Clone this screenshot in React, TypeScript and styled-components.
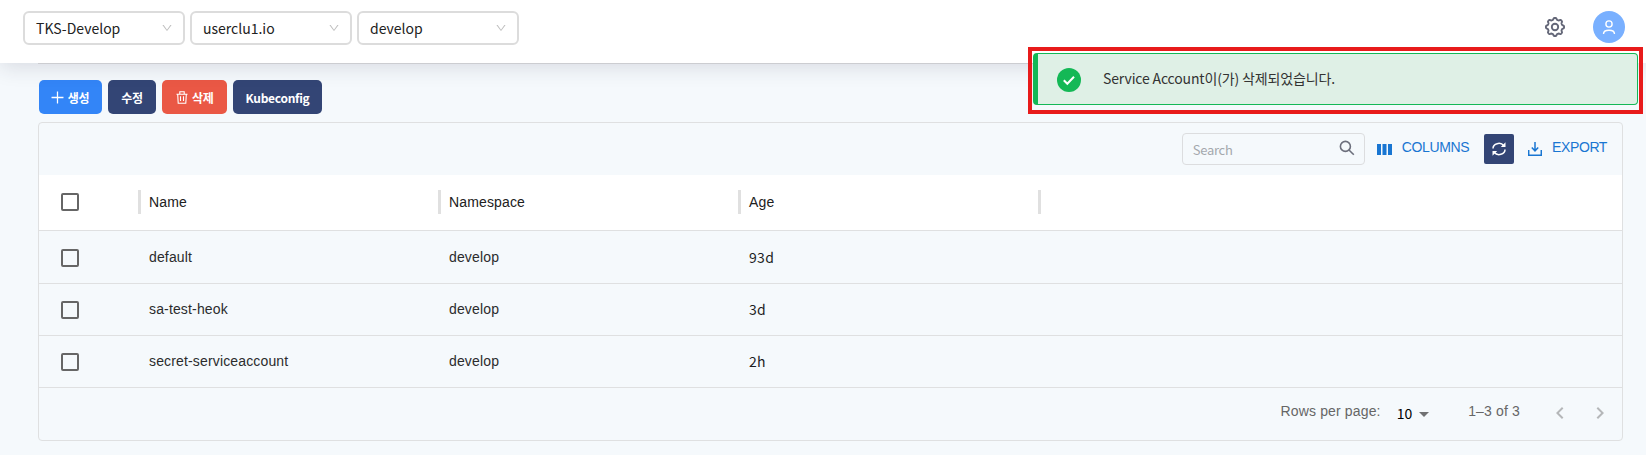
import React from "react";
import styled, { createGlobalStyle } from "styled-components";
import { AiOutlineDelete, AiOutlineDown, AiOutlinePlus } from "react-icons/ai";
import { MdArrowDropDown, MdKeyboardArrowLeft, MdKeyboardArrowRight } from "react-icons/md";

const kr = `"Noto Sans CJK KR", "Noto Sans", sans-serif`;
const arial = `"Liberation Sans", Arial, sans-serif`;

const Global = createGlobalStyle`
  * { box-sizing: border-box; }
  body { margin: 0; background: #f5f9fc; font-family: ${kr}; }
  button { font: inherit; border: 0; padding: 0; background: none; }
`;

const Page = styled.div`
  height: 455px;
  overflow: hidden;
  background: #f5f9fc;
`;

const Header = styled.header`
  position: relative;
  z-index: 1;
  display: flex;
  align-items: flex-start;
  gap: 5px;
  height: 63px;
  padding: 11px 21px 0 23px;
  background: #fff;
  box-shadow: 0 4px 20px rgba(45, 35, 66, 0.14);
`;

const Select = styled.button`
  display: flex;
  align-items: center;
  justify-content: space-between;
  width: 162px;
  height: 34px;
  padding: 0 10px 0 11px;
  border: 2px solid #dcdcdc;
  border-radius: 6px;
  background: #fff;
  color: #222;
  font-size: 14px;
  line-height: 30px;
  svg { color: #bfbfbf; }
`;

const HeaderTools = styled.div`
  display: flex;
  align-items: center;
  gap: 27px;
  height: 32px;
  margin-left: auto;
`;

const Avatar = styled.div`
  display: grid;
  place-items: center;
  width: 32px;
  height: 32px;
  border-radius: 50%;
  background: #79b0ff;
`;

const Main = styled.main`
  margin: 0 23px 0 38px;
  border-top: 1px solid #dcdde0;
`;

const Actions = styled.div`
  display: flex;
  gap: 6px;
  padding: 16px 1px 8px;
`;

const ActionButton = styled.button<{ $tone: string; $width: number; $inset?: number }>`
  display: flex;
  align-items: center;
  justify-content: center;
  gap: 2px;
  width: ${(p) => p.$width}px;
  height: 34px;
  padding-right: ${(p) => p.$inset ?? 0}px;
  border-radius: 5px;
  background: ${(p) => p.$tone};
  color: #fff;
  font-size: 12px;
  font-weight: 700;
  letter-spacing: -0.3px;
`;

const Card = styled.section`
  height: 319px;
  border: 1px solid #dfe0e1;
  border-radius: 4px;
  font-family: ${arial};
  font-size: 14px;
  color: #2b2c2d;
`;

const Toolbar = styled.div`
  display: flex;
  align-items: flex-start;
  justify-content: flex-end;
  height: 52px;
  padding: 10px 15px 0 0;
`;

const SearchBox = styled.label`
  display: flex;
  align-items: center;
  justify-content: space-between;
  width: 183px;
  height: 32px;
  padding: 0 9px 0 10px;
  border: 1px solid #dcdddf;
  border-radius: 4px;
  color: #a4a8ad;
  font-family: ${kr};
  font-size: 13px;
  letter-spacing: -0.3px;
  svg { margin-bottom: 2px; }
`;

const ToolLink = styled.button<{ $gap: number }>`
  display: flex;
  align-items: center;
  gap: ${(p) => p.$gap}px;
  margin-left: 12px;
  height: 32px;
  color: #1976d2;
  font-size: 14px;
  letter-spacing: -0.4px;
  span { margin-bottom: 4px; }
`;

const Refresh = styled.button`
  display: grid;
  place-items: center;
  width: 30px;
  height: 30px;
  margin: 1px 2px 0 15px;
  border-radius: 2px;
  background: #334575;
`;

const Row = styled.div<{ $head?: boolean; $height?: number }>`
  display: grid;
  grid-template-columns: 100px 300px 300px 300px 1fr;
  align-items: center;
  height: ${(p) => p.$height ?? 52}px;
  padding-bottom: ${(p) => (p.$head ? 1 : 0)}px;
  border-bottom: 1px solid #dfe0e1;
  background: ${(p) => (p.$head ? "#fff" : "transparent")};
  color: ${(p) => (p.$head ? "#212121" : "#2b2c2d")};
`;

const Cell = styled.div<{ $kr?: boolean }>`
  margin-bottom: 1px;
  padding-left: 10px;
  color: ${(p) => (p.$kr ? "#1c1d1f" : "inherit")};
  font-family: ${(p) => (p.$kr ? kr : arial)};
  letter-spacing: ${(p) => (p.$kr ? 0.3 : 0.15)}px;
  line-height: 20px;
`;

const HeadCell = styled.div`
  height: 24px;
  margin-left: -1px;
  padding-left: 8px;
  border-left: 3px solid #e0e0e0;
  letter-spacing: 0.15px;
  line-height: 24px;
`;

const Checkbox = styled.span<{ $drop?: number }>`
  width: 18px;
  height: 18px;
  margin: ${(p) => p.$drop ?? 0}px 0 0 22px;
  border: 2px solid #666;
  border-radius: 2px;
`;

const Footer = styled.footer`
  display: flex;
  align-items: center;
  justify-content: flex-end;
  height: 50px;
  padding-right: 10px;
  color: #666;
  svg { color: #b5b7b9; }
`;

const PageSize = styled.button`
  display: flex;
  align-items: center;
  margin: 1px 32px 0 16px;
  color: #000;
  font-family: ${kr};
  font-size: 14px;
  line-height: 20px;
  span { margin-bottom: 2px; }
  svg { color: #707173; }
`;

const FooterText = styled.span`
  margin-bottom: 4px;
  letter-spacing: 0.15px;
`;

const Pager = styled.div`
  display: flex;
  gap: 16px;
  margin-left: 28px;
`;

const ToastFrame = styled.div`
  position: absolute;
  z-index: 2;
  top: 47px;
  left: 1028px;
  width: 615px;
  height: 67px;
  padding: 2px 1px;
  border: 4px solid #e81b1b;
`;

const Toast = styled.div`
  display: flex;
  align-items: center;
  height: 52px;
  border: 1px solid #14b856;
  border-left-width: 5px;
  border-radius: 4px;
  background: #dff0e6;
  color: #333;
  font-size: 14px;
  letter-spacing: -0.15px;
  gap: 22px;
  padding-left: 19px;
  svg { margin-top: 2px; }
  span { margin-bottom: 2px; }
`;

const rows = [
  ["default", "develop", "93d"],
  ["sa-test-heok", "develop", "3d"],
  ["secret-serviceaccount", "develop", "2h"],
];

// Outline of an eight-toothed cog, sampled around the centre of a 22px box.
const cogPath =
  Array.from({ length: 96 }, (_, i) => {
    const angle = (i / 96) * Math.PI * 2;
    const radius = 8.2 + Math.tanh(2 * Math.cos(8 * angle)) * 0.9;
    const x = (11 + radius * Math.sin(angle)).toFixed(2);
    const y = (11 - radius * Math.cos(angle)).toFixed(2);
    return `${i ? "L" : "M"}${x} ${y}`;
  }).join("") + "Z";

const SettingsIcon = () => (
  <svg width="22" height="22" viewBox="0 0 22 22" fill="none" stroke="#646778" strokeWidth="1.9" strokeLinejoin="round">
    <path d={cogPath} />
    <circle cx="11" cy="11" r="3.2" />
  </svg>
);

const TrashIcon = () => (
  <svg width="12" height="13" viewBox="0 0 12 13" fill="none" stroke="#fff" strokeWidth="1.1">
    <path d="M.5 3.200h11M3.800 3V.8h4.400V3M1.700 3.400l.5 8.800h7.600l.5-8.800M4.500 5.300v4.800M7.500 5.300v4.800" />
  </svg>
);

export default function App() {
  return (
    <Page>
      <Global />
      <Header>
        {["TKS-Develop", "userclu1.io", "develop"].map((label) => (
          <Select key={label}>{label}<AiOutlineDown size={12} /></Select>
        ))}
        <HeaderTools>
          <SettingsIcon />
          <Avatar>
            <svg width="14" height="16" viewBox="0 0 14 16" fill="none" stroke="#fff" strokeWidth="1.4">
              <circle cx="7" cy="5" r="3.1" />
              <path d="M1.5 15c0-5 11-5 11 0" />
            </svg>
          </Avatar>
        </HeaderTools>
      </Header>
      <Main>
        <Actions>
          <ActionButton $tone="#3385f7" $width={63} $inset={3}><AiOutlinePlus size={17} />생성</ActionButton>
          <ActionButton $tone="#334575" $width={48}>수정</ActionButton>
          <ActionButton $tone="#ea5845" $width={65}><TrashIcon />&nbsp;삭제</ActionButton>
          <ActionButton $tone="#334575" $width={89}>Kubeconfig</ActionButton>
        </Actions>
        <Card>
          <Toolbar>
            <SearchBox>
              Search
              <svg width="16" height="16" viewBox="0 0 16 16" fill="none" stroke="#6c6f7c" strokeWidth="1.6">
                <circle cx="6.4" cy="6.4" r="5" /><path d="M10 10l4.8 4.8" />
              </svg>
            </SearchBox>
            <ToolLink $gap={10}>
              <svg width="15" height="11" viewBox="0 0 15 11" fill="currentColor">
                <path d="M0 0h4v11H0zM5.5 0h4v11h-4zM11 0h4v11h-4z" />
              </svg>
              <span>COLUMNS</span>
            </ToolLink>
            <Refresh>
              <svg width="14" height="14" viewBox="0 0 14 14" fill="none" stroke="#fff" strokeWidth="1.5">
                <path d="M1 6.5C1 1.5 8.500 -.5 11.800 3.700M13 7.500C13 12.500 5.500 14.500 2.200 10.300" />
                <path d="M13.500 .3V5H8.800zM.5 13.700V9h4.700z" fill="#fff" stroke="none" />
              </svg>
            </Refresh>
            <ToolLink $gap={10}>
              <svg width="14" height="14" viewBox="0 0 14 14" fill="none" stroke="currentColor" strokeWidth="1.5">
                <path d="M.7 8v5.300h12.600V8M7 0v8.500M3.800 5.500L7 8.800l3.200-3.300" />
              </svg>
              <span>EXPORT</span>
            </ToolLink>
          </Toolbar>
          <Row $head $height={56}>
            <Checkbox />
            <HeadCell>Name</HeadCell>
            <HeadCell>Namespace</HeadCell>
            <HeadCell>Age</HeadCell>
            <HeadCell />
          </Row>
          {rows.map(([name, namespace, age], index) => (
            <Row key={name} $height={index === 0 ? 53 : 52}>
              <Checkbox $drop={1} />
              <Cell>{name}</Cell>
              <Cell>{namespace}</Cell>
              <Cell $kr>{age}</Cell>
            </Row>
          ))}
          <Footer>
            <FooterText>Rows per page:</FooterText>
            <PageSize><span>10</span><MdArrowDropDown size={24} /></PageSize>
            <FooterText>1–3 of 3</FooterText>
            <Pager>
              <MdKeyboardArrowLeft size={24} />
              <MdKeyboardArrowRight size={24} />
            </Pager>
          </Footer>
        </Card>
      </Main>
      <ToastFrame>
        <Toast>
          <svg width="24" height="24" viewBox="0 0 24 24">
            <circle cx="12" cy="12" r="12" fill="#14b856" />
            <path d="M6.800 12.200l3.500 3.500 6.700-7" fill="none" stroke="#fff" strokeWidth="2" />
          </svg>
          <span>Service Account이(가) 삭제되었습니다.</span>
        </Toast>
      </ToastFrame>
    </Page>
  );
}
